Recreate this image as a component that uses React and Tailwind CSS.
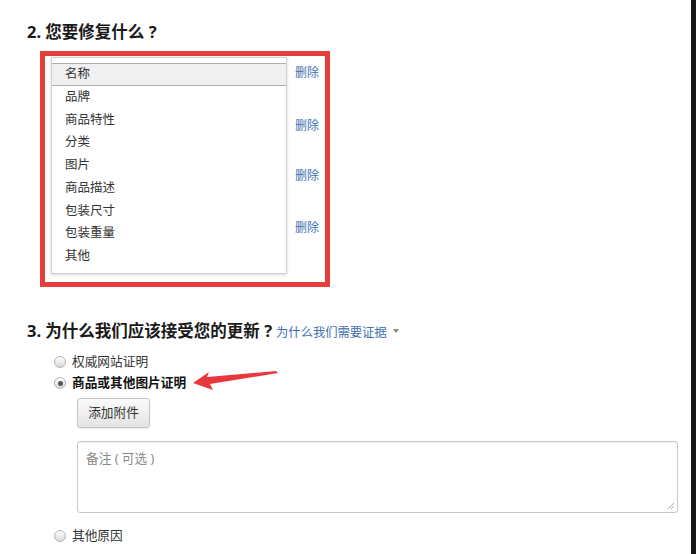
import React from "react";

const items = ["名称", "品牌", "商品特性", "分类", "图片", "商品描述", "包装尺寸", "包装重量", "其他"];

function Radio({ checked }) {
  return (
    <span className="relative inline-flex w-[12px] h-[12px] rounded-full border border-[#b4b4b4] bg-gradient-to-b from-[#ffffff] to-[#d9d9d9] items-center justify-center shrink-0">
      {checked && <span className="w-[5px] h-[5px] rounded-full bg-[#555]" />}
    </span>
  );
}

export default function App() {
  return (
    <div className="relative w-[696px] h-[554px] bg-white overflow-hidden font-['Noto_Sans','Noto_Sans_CJK_SC',sans-serif] text-[#333]">
      <div className="pl-[27px] pt-[20px]">
        <h2 className="text-[16.5px] font-bold leading-[24px] text-[#1a1a1a]">2. 您要修复什么 ?</h2>
        <div className="ml-[13px] mt-[7px] w-[290px] h-[236px] border-[5px] border-[#e53c3c] flex pl-[6px] pt-[1px]">
          <div className="w-[236px] h-[217px] border border-[#cfcfcf] bg-white shadow-[0_1px_3px_rgba(0,0,0,0.15)] pt-[5px] overflow-hidden">
            {items.map((t, i) => (
              <div
                key={t}
                className={
                  i === 0
                    ? "h-[22.75px] flex items-center pl-[13px] text-[12.5px] bg-[#f0f0f0] border border-[#b0b0b0] -mx-px text-[#333]"
                    : "h-[22.75px] flex items-center pl-[13px] text-[12.5px] text-[#333]"
                }
              >
                {t}
              </div>
            ))}
          </div>
          <div className="ml-[8px] flex flex-col text-[12px] leading-[16px] text-[#3e6fb0]">
            <span className="mt-[8px]">删除</span>
            <span className="mt-[37px]">删除</span>
            <span className="mt-[34px]">删除</span>
            <span className="mt-[36px]">删除</span>
          </div>
        </div>

        <div className="mt-[32px] flex items-baseline h-[24px]">
          <h2 className="text-[16.5px] font-bold leading-[24px] text-[#1a1a1a]">3. 为什么我们应该接受您的更新 ?</h2>
          <span className="ml-[4px] text-[12.3px] text-[#3e6fb0]">为什么我们需要证据</span>
          <span className="ml-[6px] self-center w-0 h-0 border-l-[3px] border-r-[3px] border-t-[4px] border-l-transparent border-r-transparent border-t-[#888]" />
        </div>

        <div className="mt-[9px] pl-[27px] h-[20px] flex items-center gap-[6px] text-[12.7px]">
          <Radio />
          <span className="text-[#333]">权威网站证明</span>
        </div>
        <div className="mt-[1px] pl-[27px] h-[20px] flex items-center gap-[6px] text-[12.7px]">
          <Radio checked />
          <span className="font-bold text-[#111]">商品或其他图片证明</span>
        </div>
        <div className="mt-[5px] ml-[50px] w-[73px] h-[30px] rounded-[3px] border border-[#c4c4c4] bg-gradient-to-b from-[#fafafa] to-[#e4e4e4] flex items-center justify-center text-[12.7px] text-[#333] shadow-[0_1px_1px_rgba(0,0,0,0.08)]">
          添加附件
        </div>
        <div className="mt-[13px] ml-[50px] w-[601px] h-[72px] rounded-[3px] border border-[#c8c8c8] bg-white relative px-[8px] pt-[7px] text-[12.7px] text-[#888] shadow-[inset_0_1px_1px_rgba(0,0,0,0.05)]">
          备注 ( 可选 )
          <svg className="absolute right-[2px] bottom-[2px]" width="8" height="8" viewBox="0 0 8 8">
            <path d="M7 1 L1 7 M7 4 L4 7" stroke="#aaa" strokeWidth="1" />
          </svg>
        </div>
        <div className="mt-[13px] pl-[27px] h-[20px] flex items-center gap-[6px] text-[12.7px]">
          <Radio />
          <span className="text-[#333]">其他原因</span>
        </div>
      </div>

      <svg className="absolute left-0 top-0 pointer-events-none" width="696" height="554">
        <polygon points="193,383 209,372 207,377 276,371 278,373 210,384 213,390" fill="#e8383d" />
      </svg>

      <div className="absolute right-0 top-0 w-[5px] h-full bg-[#151515]" />
    </div>
  );
}
